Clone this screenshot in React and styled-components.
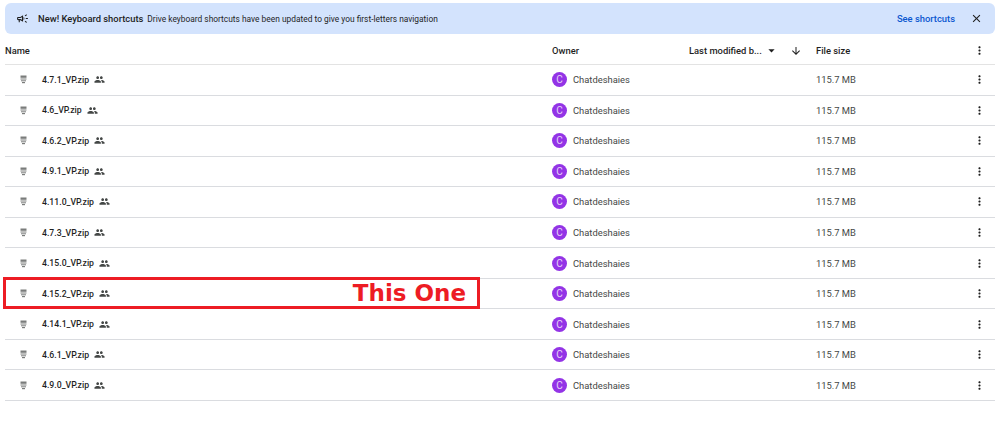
import React from 'react'
import styled, { createGlobalStyle } from 'styled-components'
import { MdArrowDownward, MdArrowDropDown, MdClose, MdMoreVert, MdOutlineCampaign, MdPeople } from 'react-icons/md'

const files = [
  '4.7.1_VP.zip',
  '4.6_VP.zip',
  '4.6.2_VP.zip',
  '4.9.1_VP.zip',
  '4.11.0_VP.zip',
  '4.7.3_VP.zip',
  '4.15.0_VP.zip',
  '4.15.2_VP.zip',
  '4.14.1_VP.zip',
  '4.6.1_VP.zip',
  '4.9.0_VP.zip',
]

const GlobalStyle = createGlobalStyle`
  html, body {
    margin: 0;
    background: #fff;
  }
  body {
    font-family: Roboto, "Liberation Sans", sans-serif;
    color: #1f1f1f;
  }
`
const Page = styled.div`
  position: relative;
  width: 1000px;
  height: 422px;
  padding: 3px 5px 0;
  box-sizing: border-box;
  overflow: hidden;
`
const Banner = styled.div`
  height: 31px;
  display: flex;
  align-items: center;
  padding: 0 12px 0 11px;
  background: #d3e3fd;
  border-radius: 6px;
  font-size: 8.4px;
  color: #1f1f1f;
`
const BannerIcon = styled(MdOutlineCampaign)`
  font-size: 13px;
  margin-right: 9px;
  color: #1f1f1f;
`
const BannerTitle = styled.span`
  font-size: 9.4px;
  font-weight: 500;
  margin-right: 4px;
`
const BannerLink = styled.span`
  margin-left: auto;
  margin-right: 15px;
  font-size: 9.4px;
  color: #0b57d0;
  font-weight: 500;
`
const CloseIcon = styled(MdClose)`
  font-size: 13px;
  color: #1f1f1f;
`
const Row = styled.div`
  display: grid;
  grid-template-columns: 547px 137px 127px 1fr 28px;
  align-items: center;
  box-sizing: border-box;
  height: ${props => props.$height}px;
  padding-top: ${props => props.$top}px;
  border-bottom: 1px solid ${props => props.$line};
  font-size: 9.4px;
`
const HeadCell = styled.div`
  display: flex;
  align-items: center;
  font-weight: 500;
  color: #1f1f1f;
`
const SortArrow = styled(MdArrowDownward)`
  font-size: 12px;
  margin-left: 11px;
`
const Caret = styled(MdArrowDropDown)`
  font-size: 15px;
  margin-left: 2px;
`
const NameCell = styled.div`
  display: flex;
  align-items: center;
  padding-left: 15px;
`
const FileName = styled.span`
  margin-left: 15px;
  font-size: 8.7px;
  font-weight: 500;
  color: #1f1f1f;
`
const Shared = styled(MdPeople)`
  font-size: 11px;
  margin-left: 5px;
  color: #444746;
`
const OwnerCell = styled.div`
  display: flex;
  align-items: center;
  color: #444746;
`
const Avatar = styled.span`
  width: 15px;
  height: 15px;
  margin-right: 6px;
  display: flex;
  align-items: center;
  justify-content: center;
  border-radius: 50%;
  background: #9334e6;
  color: #e8d5f7;
  font-size: 10px;
`
const Size = styled.div`
  color: #444746;
`
const Menu = styled(MdMoreVert)`
  justify-self: center;
  font-size: 13px;
  color: #1f1f1f;
  margin-left: -4px;
`
const Highlight = styled.div`
  position: absolute;
  left: 3px;
  top: 277px;
  width: 477px;
  height: 32px;
  box-sizing: border-box;
  border: 3px solid #ed1c24;
  display: flex;
  align-items: center;
  justify-content: flex-end;
  padding-right: 11px;
  color: #ed1c24;
  font-family: "DejaVu Sans", Verdana, sans-serif;
  font-size: 23px;
  font-weight: 700;
`

const ZipIcon = () => (
  <svg width="7" height="9" viewBox="0 0 7 9" fill="#7a7c7b">
    <path d="M0.5 0.5h6v2.3h-6z" />
    <path d="M0.5 3.5h6v1h-6z" />
    <path d="M1 5.3h5v1h-5z" />
    <path d="M2 7h3v1.2h-3z" />
  </svg>
)

export default function App() {
  return (
    <Page>
      <GlobalStyle />
      <Banner>
        <BannerIcon />
        <BannerTitle>New! Keyboard shortcuts</BannerTitle>
        Drive keyboard shortcuts have been updated to give you first-letters navigation
        <BannerLink>See shortcuts</BannerLink>
        <CloseIcon />
      </Banner>
      <Row $height={31} $top={3} $line="#e3e3e3">
        <HeadCell>Name</HeadCell>
        <HeadCell>Owner</HeadCell>
        <HeadCell>
          Last modified b...
          <Caret />
          <SortArrow />
        </HeadCell>
        <HeadCell>File size</HeadCell>
        <Menu />
      </Row>
      {files.map(name => (
        <Row key={name} $height={30.55} $top={0} $line="#dadce0">
          <NameCell>
            <ZipIcon />
            <FileName>{name}</FileName>
            <Shared />
          </NameCell>
          <OwnerCell>
            <Avatar>C</Avatar>
            Chatdeshaies
          </OwnerCell>
          <div />
          <Size>115.7 MB</Size>
          <Menu />
        </Row>
      ))}
      <Highlight>This One</Highlight>
    </Page>
  )
}
